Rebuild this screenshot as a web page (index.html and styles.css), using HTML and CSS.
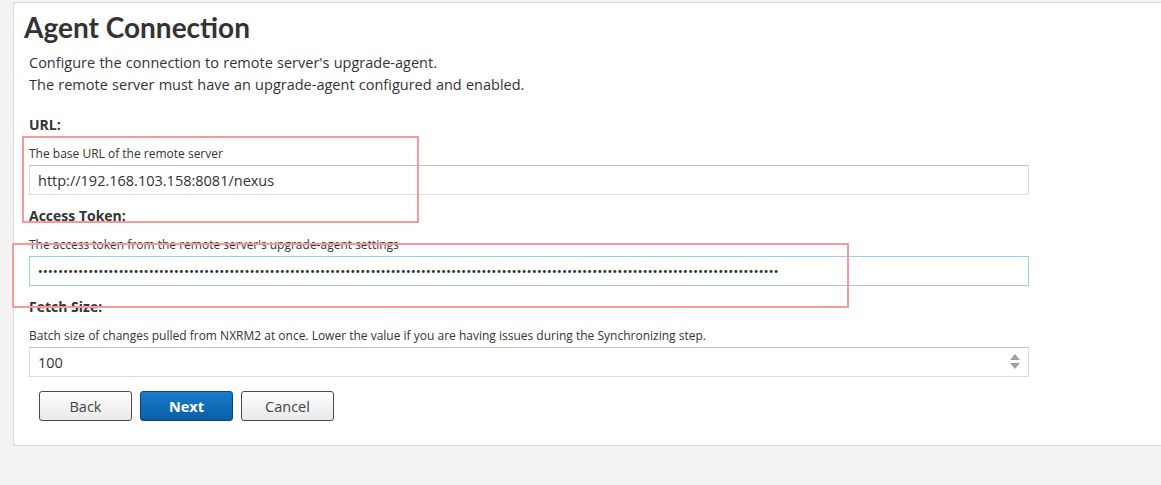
FILE: index.html
```html
<!DOCTYPE html>
<html>
<head>
<meta charset="utf-8">
<link rel="stylesheet" href="styles.css">
</head>
<body>
<div class="panel">
  <h1 class="title">Agent Connection</h1>
  <div class="content">
    <p class="desc">Configure the connection to remote server's upgrade-agent.<br>The remote server must have an upgrade-agent configured and enabled.</p>
    <div class="field">
      <div class="label">URL:</div>
      <div class="help">The base URL of the remote server</div>
      <input class="input" type="text" value="http://192.168.103.158:8081/nexus">
    </div>
    <div class="field">
      <div class="label">Access Token:</div>
      <div class="help">The access token from the remote server's upgrade-agent settings</div>
      <input class="input input-focus" type="password" value="aaaaaaaaaaaaaaaaaaaaaaaaaaaaaaaaaaaaaaaaaaaaaaaaaaaaaaaaaaaaaaaaaaaaaaaaaaaaaaaaaaaaaaaaaaaaaaaaaaaaaaaaaaaaaaaaaaaaaaaaaaaaaaaaaaaaaaaaaaaaaaaaaaa">
    </div>
    <div class="field">
      <div class="label">Fetch Size:</div>
      <div class="help">Batch size of changes pulled from NXRM2 at once. Lower the value if you are having issues during the Synchronizing step.</div>
      <div class="number-wrap">
        <input class="input" type="text" value="100">
        <span class="spinner"><span class="up"></span><span class="down"></span></span>
      </div>
    </div>
    <div class="buttons">
      <button class="btn">Back</button>
      <button class="btn btn-primary">Next</button>
      <button class="btn">Cancel</button>
    </div>
  </div>
</div>
<div class="annot annot-1"></div>
<div class="annot annot-2"></div>
</body>
</html>
```
FILE: styles.css
```css
html, body {
  margin: 0;
  padding: 0;
}
body {
  background: #f3f3f3;
  font-family: "Open Sans", "Liberation Sans", sans-serif;
  color: #333;
  width: 1161px;
  height: 485px;
  overflow: hidden;
  position: relative;
}
.panel {
  margin: 2px 0 0 13px;
  background: #fff;
  border: 1px solid #dcdcdc;
  border-right: none;
  height: 444px;
  box-sizing: border-box;
  padding: 0 0 0 10px;
}
.title {
  margin: 0;
  padding-top: 7px;
  font-family: "Lato", "Liberation Sans", sans-serif;
  font-size: 28px;
  line-height: 34px;
  font-weight: 700;
  color: #333;
}
.content {
  padding-left: 5px;
}
.desc {
  margin: 8px 0 19px;
  font-size: 14.5px;
  line-height: 22px;
  word-spacing: 0.5px;
  color: #333;
}
.field {
  margin-bottom: 11px;
}
.label {
  font-size: 14px;
  font-weight: 700;
  line-height: 20px;
  margin-bottom: 11px;
}
.help {
  font-size: 12px;
  line-height: 16px;
  margin-bottom: 3px;
  color: #333;
}
.input {
  display: block;
  width: 1000px;
  height: 30px;
  box-sizing: border-box;
  margin: 0;
  padding: 0 8px;
  border: 1px solid #dcdcdc;
  border-top-color: #c0c0c0;
  background: #fff;
  font-family: "Open Sans", "Liberation Sans", sans-serif;
  font-size: 14.5px;
  color: #333;
  outline: none;
}
.input-focus {
  border-color: #9ccaee;
  font-family: "Lato", "Liberation Sans", sans-serif;
  font-size: 8px;
  letter-spacing: 0.4px;
}
.number-wrap {
  position: relative;
  width: 1000px;
}
.spinner {
  position: absolute;
  right: 9px;
  top: 7px;
  display: flex;
  flex-direction: column;
  gap: 3px;
}
.spinner .up {
  width: 0;
  height: 0;
  border-left: 5px solid transparent;
  border-right: 5px solid transparent;
  border-bottom: 6px solid #a0a0a0;
}
.spinner .down {
  width: 0;
  height: 0;
  border-left: 5px solid transparent;
  border-right: 5px solid transparent;
  border-top: 6px solid #a0a0a0;
}
.buttons {
  display: flex;
  gap: 8px;
  margin-top: 14px;
  padding-left: 10px;
}
.btn {
  width: 93px;
  height: 30px;
  box-sizing: border-box;
  border: 1px solid #4a4a4a;
  border-radius: 3px;
  background: linear-gradient(#ffffff, #e9e9e9);
  font-family: "Open Sans", "Liberation Sans", sans-serif;
  font-size: 14.5px;
  color: #444;
  padding: 0;
  cursor: pointer;
}
.btn-primary {
  background: linear-gradient(#1a7cca, #0a5da6);
  border-color: #0b4678;
  color: #fff;
  font-weight: 700;
}
.annot {
  position: absolute;
  border: 2px solid #f7999b;
  box-sizing: border-box;
  pointer-events: none;
}
.annot-1 {
  left: 22px;
  top: 136px;
  width: 397px;
  height: 87px;
}
.annot-2 {
  left: 12px;
  top: 243px;
  width: 837px;
  height: 65px;
}
```
